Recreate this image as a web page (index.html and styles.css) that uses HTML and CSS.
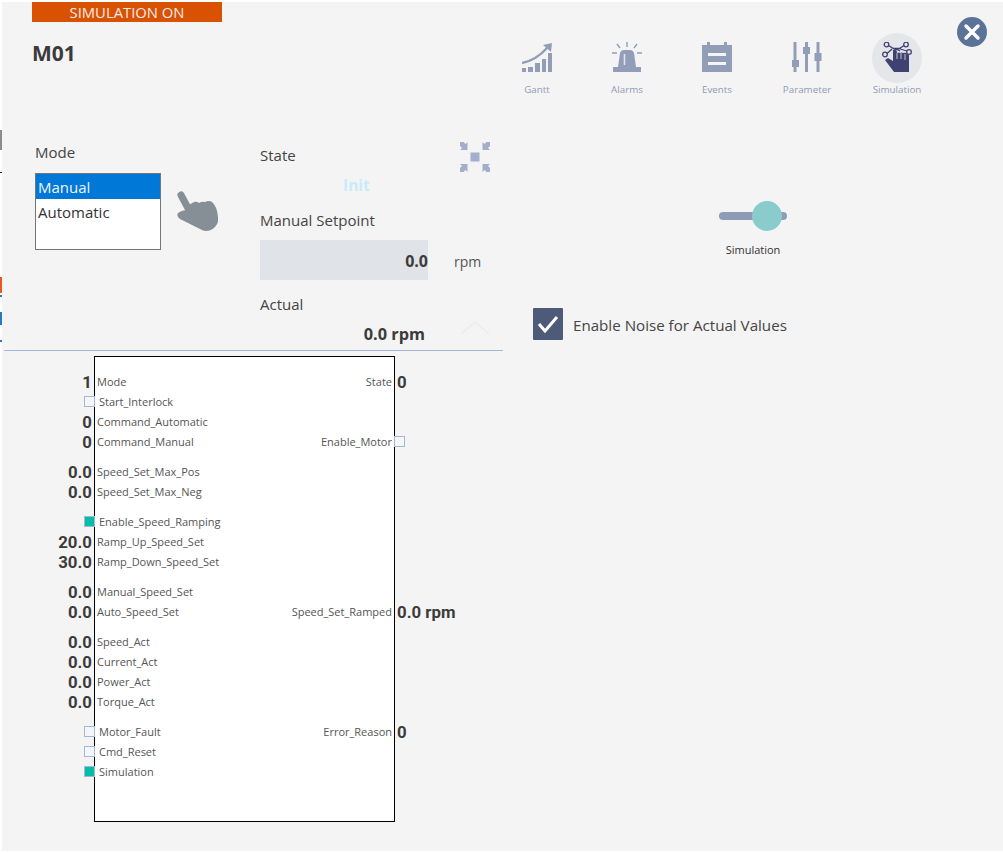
FILE: index.html
```html
<!DOCTYPE html>
<html lang="en">
<head>
<meta charset="utf-8">
<title>M01</title>
<link rel="stylesheet" href="styles.css">
</head>
<body>
<span class="edge edge-grey"></span><span class="edge edge-black"></span><span class="edge edge-orange"></span><span class="edge edge-dot1"></span><span class="edge edge-blue"></span><span class="edge edge-dot2"></span>
<main class="panel">
  <header class="head">
    <div class="title-col">
      <div class="banner">SIMULATION ON</div>
      <h1 class="title">M01</h1>
    </div>
    <nav class="nav">
      <div class="nav-item">
        <svg class="nav-icon" viewBox="0 0 30 30"><path fill="#929eb8" d="M0 26h4v4H0zM6 25h5v5H6zM13 21h5v9h-5zM20 17h4v13h-4zM26 11h4v19h-4z"/><path fill="none" stroke="#929eb8" stroke-width="2.400" d="M0 21C10 19 17 15 25 6"/><path fill="#929eb8" d="M21 3l9-2-1 9z"/></svg>
        <span>Gantt</span>
      </div>
      <div class="nav-item">
        <svg class="nav-icon" viewBox="0 0 30 30"><path fill="#929eb8" d="M1 25h28v5H1zM6 25l2-14q1-3 4-3h6q3 0 4 3l2 14z"/><path stroke="#929eb8" stroke-width="1.400" d="M15 0v5M5 2l3 4M25 2l-3 4M0 11h5M25 11h5"/><path stroke="#dfe3ea" stroke-width="1.600" d="M12.500 12v11"/></svg>
        <span>Alarms</span>
      </div>
      <div class="nav-item">
        <svg class="nav-icon" viewBox="0 0 30 30"><path fill="#929eb8" d="M0 3h5V0h3v3h14V0h3v3h5v27H0z"/><path fill="#f5f5f5" d="M6 11h18v3H6zM6 20h18v3H6z"/></svg>
        <span>Events</span>
      </div>
      <div class="nav-item">
        <svg class="nav-icon" viewBox="0 0 30 30"><path stroke="#929eb8" stroke-width="3" d="M3 0v30M14.500 0v30M26 0v30"/><path fill="#929eb8" d="M0 18h7v7H0zM11 5h7v7h-7zM22.500 11h7v8h-7z"/></svg>
        <span>Parameter</span>
      </div>
      <div class="nav-item nav-active">
        <svg class="nav-icon" viewBox="0 0 30 30"><g fill="none" stroke="#3f4270" stroke-width="1.300"><circle cx="4.500" cy="2.500" r="2.300"/><circle cx="24" cy="2.500" r="2.300"/><circle cx="3" cy="12.500" r="2.300"/><circle cx="27" cy="10" r="2.300"/><path d="M6.500 3.500l5 3h6l4.500-3M5 11.500l5-4.500M18 7l7 2"/><path d="M11 9q3-3 7 0"/></g><path fill="#3f4270" d="M3 18l3-2 5 3V10q0-2 2-2t2 3q2-1 3 0 2-1 3 0 3-1 4 1l2 1v17H12z"/><path stroke="#e4e6ea" stroke-width=".8" d="M15 11v6M19 11v6M23 12v6"/></svg>
        <span>Simulation</span>
      </div>
    </nav>
    <button class="close" aria-label="Close"><svg viewBox="0 0 30 30"><path stroke="#fff" stroke-width="3.400" stroke-linecap="round" d="M9 9l12 12M21 9L9 21"/></svg></button>
  </header>

  <div class="body">
    <section class="left">
      <div class="controls">
        <div class="mode-col">
          <div class="label">Mode</div>
          <div class="mode-row">
            <div class="listbox">
              <div class="opt opt-sel">Manual</div>
              <div class="opt">Automatic</div>
            </div>
            <svg class="hand" viewBox="0 0 42 44"><path fill="none" stroke="#868e96" stroke-width="7" stroke-linecap="round" d="M5 6l8 15"/><path fill="#868e96" d="M11 17l7-4q3-1 5 1 3-2 6-1 4-2 7 0 5 4 6 15 1 6-3 10-4 4-9 4-3 0-6-2L4 30q-4-3-2-6 4-3 10-3z"/></svg>
          </div>
        </div>
        <div class="state-col">
          <div class="label state-label">State</div>
          <div class="init">Init</div>
          <div class="label setpoint-label">Manual Setpoint</div>
          <div class="setpoint-row">
            <div class="setpoint">0.0</div>
            <div class="unit">rpm</div>
          </div>
          <div class="label actual-label">Actual</div>
          <div class="actual">0.0 rpm</div>
        </div>
        <div class="tool-col">
          <svg class="collapse" viewBox="0 0 30 30"><path fill="#a3aecb" d="M10.500 10.500h9v9h-9zM0 0h3.500l2 2 2-2v8H0l2-2-2-2zM30 0h-3.500l-2 2-2-2v8H30l-2-2 2-2zM0 30h3.500l2-2 2 2v-8H0l2 2-2 2zM30 30h-3.500l-2-2-2 2v-8H30l-2 2 2 2z"/></svg>
          <svg class="chevron" viewBox="0 0 30 15"><path fill="none" stroke="#eeeeee" stroke-width="2" d="M1 14L15 2l14 12"/></svg>
        </div>
      </div>
      <div class="diagram">
        <div class="fb">
          <div class="row"><b class="val-l">1</b><span>Mode</span><span>State</span><b class="val-r">0</b></div>
          <div class="row row-check"><i class="sq sq-l"></i><span>Start_Interlock</span></div>
          <div class="row"><b class="val-l">0</b><span>Command_Automatic</span></div>
          <div class="row"><b class="val-l">0</b><span>Command_Manual</span><span>Enable_Motor</span><i class="sq sq-r"></i></div>
          <div class="group">
            <div class="row"><b class="val-l">0.0</b><span>Speed_Set_Max_Pos</span></div>
            <div class="row"><b class="val-l">0.0</b><span>Speed_Set_Max_Neg</span></div>
          </div>
          <div class="group">
            <div class="row row-check"><i class="sq sq-l sq-on"></i><span>Enable_Speed_Ramping</span></div>
            <div class="row"><b class="val-l">20.0</b><span>Ramp_Up_Speed_Set</span></div>
            <div class="row"><b class="val-l">30.0</b><span>Ramp_Down_Speed_Set</span></div>
          </div>
          <div class="group">
            <div class="row"><b class="val-l">0.0</b><span>Manual_Speed_Set</span></div>
            <div class="row"><b class="val-l">0.0</b><span>Auto_Speed_Set</span><span>Speed_Set_Ramped</span><b class="val-r">0.0 rpm</b></div>
          </div>
          <div class="group">
            <div class="row"><b class="val-l">0.0</b><span>Speed_Act</span></div>
            <div class="row"><b class="val-l">0.0</b><span>Current_Act</span></div>
            <div class="row"><b class="val-l">0.0</b><span>Power_Act</span></div>
            <div class="row"><b class="val-l">0.0</b><span>Torque_Act</span></div>
          </div>
          <div class="group">
            <div class="row row-check"><i class="sq sq-l"></i><span>Motor_Fault</span><span>Error_Reason</span><b class="val-r">0</b></div>
            <div class="row row-check"><i class="sq sq-l"></i><span>Cmd_Reset</span></div>
            <div class="row row-check"><i class="sq sq-l sq-on"></i><span>Simulation</span></div>
          </div>
        </div>
      </div>
    </section>
    <section class="right">
      <div class="toggle-wrap">
        <div class="toggle"><div class="knob"></div></div>
        <div class="toggle-label">Simulation</div>
      </div>
      <div class="check-row">
        <div class="checkbox"><svg viewBox="0 0 30 32"><path fill="none" stroke="#fff" stroke-width="3" d="M6 16l6 7L24 9"/></svg></div>
        <span class="check-text">Enable Noise for Actual Values</span>
      </div>
    </section>
  </div>
</main>
</body>
</html>
```
FILE: styles.css
```css
* { box-sizing: border-box; }
html, body { margin: 0; padding: 0; }
body { background: #fff; font-family: "Open Sans", "Noto Sans", sans-serif; color: #444; overflow: hidden; }

.edge { position: absolute; left: 0; width: 2px; }
.edge-grey { top: 130px; height: 20px; background: #8c8c8c; }
.edge-black { top: 172px; height: 1px; background: #222; }
.edge-orange { top: 277px; height: 16px; background: #e8591f; }
.edge-dot1 { top: 295px; height: 2px; background: #2a78c0; }
.edge-blue { top: 312px; height: 13px; background: #2a78c0; }
.edge-dot2 { top: 340px; height: 2px; background: #2a78c0; }

.panel { position: relative; margin: 2px 0 0 2px; height: 849px; background: #f4f4f4; }

.head { display: flex; height: 128px; position: relative; }
.title-col { width: 490px; padding-left: 30px; }
.banner { width: 190px; height: 20px; background: #d95204; color: #f5ece4; font-size: 14.800px; line-height: 20px; text-align: center; }
.title { margin: 19px 0 0; font-size: 21px; line-height: 24px; font-weight: 700; color: #3b3b3b; }

.nav { display: flex; padding-top: 40px; }
.nav-item { position: relative; width: 90px; display: flex; flex-direction: column; align-items: center; font-size: 9.800px; line-height: 14px; color: #8f9bb3; }
.nav-item span { margin-top: 11px; position: relative; }
.nav-icon { width: 30px; height: 30px; position: relative; z-index: 1; }
.nav-active::before { content: ""; position: absolute; left: 20px; top: -9px; width: 50px; height: 50px; border-radius: 50%; background: #e4e6ea; }

.close { position: absolute; left: 955px; top: 15px; width: 30px; height: 30px; padding: 0; border: 0; border-radius: 50%; background: #5a7396; }
.close svg { display: block; width: 30px; height: 30px; }

.body { display: flex; }
.left { width: 499px; margin-left: 2px; flex: none; }
.right { flex: 1; padding-left: 30px; }

.controls { position: relative; display: flex; height: 221px; border-bottom: 1px solid #a3b8d8; }
.label { font-size: 15px; line-height: 20px; color: #444; }
.mode-col { width: 225px; padding: 12px 0 0 31px; flex: none; }
.mode-row { display: flex; margin-top: 11px; }
.listbox { width: 126px; height: 77px; border: 1px solid #767676; background: #fff; font-size: 15px; flex: none; }
.opt { height: 25px; line-height: 27px; padding-left: 2px; color: #333; }
.opt-sel { background: #0078d7; color: #f0f6fc; }
.hand { width: 42px; height: 44px; margin: 16px 0 0 15px; flex: none; }

.state-col { width: 260px; padding-top: 15px; padding-left: 31px; flex: none; }
.state-label { height: 20px; }
.init { margin-top: 10px; height: 20px; line-height: 20px; padding-left: 83px; font-size: 15.500px; font-weight: 700; color: #c9ebf9; }
.setpoint-label { margin-top: 15px; }
.setpoint-row { display: flex; margin-top: 10px; }
.setpoint { width: 168px; height: 40px; background: #e0e3e8; text-align: right; font-size: 16px; font-weight: 700; line-height: 42px; color: #3b3b3b; flex: none; }
.unit { margin-left: 26px; font-size: 14px; line-height: 44px; color: #555; flex: none; }
.actual-label { margin-top: 10px; }
.actual { margin-top: 10px; width: 165px; text-align: right; font-size: 16.300px; font-weight: 700; line-height: 20px; color: #3b3b3b; }

.tool-col { position: absolute; left: 456px; top: 12px; }
.collapse { display: block; width: 30px; height: 30px; }
.chevron { display: block; width: 30px; height: 15px; margin-top: 148px; }

.diagram { padding: 5px 0 0 90px; }
.fb { width: 301px; height: 466px; padding: 15px 0 0; background: #fff; border: 1px solid #000; font-size: 11px; color: #555; }
.row { position: relative; display: flex; justify-content: space-between; height: 20px; line-height: 20px; padding: 0 2px; white-space: nowrap; }
.row-check { padding-left: 4px; }
.group { margin-top: 10px; }
.val-l, .val-r { position: absolute; top: 0; font-family: Roboto, "Open Sans", sans-serif; font-size: 16.800px; font-weight: 700; color: #3b3b3b; line-height: 20px; }
.val-l { right: calc(100% + 3px); }
.val-r { left: calc(100% + 3px); }
.sq { position: absolute; top: 4px; width: 11px; height: 11px; border: 1px solid #a3b8d8; background: #f4f6fa; }
.sq-l { left: -11px; }
.sq-r { left: 100%; }
.sq-on { background: #00bfa5; border: 1px solid #a3b8d8; }

.toggle-wrap { width: 70px; margin: 82px 0 0 185px; display: flex; flex-direction: column; align-items: center; }
.toggle { position: relative; width: 68px; height: 8px; border-radius: 4px; background: #8f9cb8; }
.knob { position: absolute; left: 33px; top: -11px; width: 30px; height: 30px; border-radius: 50%; background: #8acccc; }
.toggle-label { margin-top: 23px; font-size: 11px; line-height: 14px; color: #333; white-space: nowrap; }
.check-row { display: flex; align-items: center; margin-top: 51px; }
.checkbox { width: 30px; height: 32px; background: #4d5b78; border-radius: 1px; flex: none; }
.checkbox svg { display: block; width: 30px; height: 32px; }
.check-text { margin-left: 10px; padding-top: 2px; font-size: 15.150px; color: #444; white-space: nowrap; }
```
